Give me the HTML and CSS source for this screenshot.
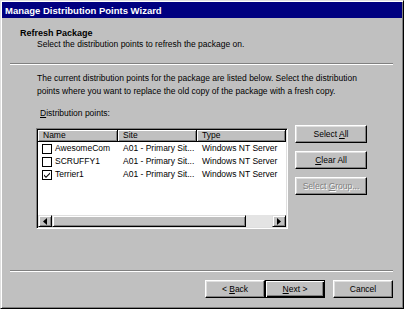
FILE: index.html
```html
<!DOCTYPE html>
<html>
<head>
<meta charset="utf-8">
<link rel="stylesheet" href="styles.css">
</head>
<body>
<div class="window">
  <div class="titlebar">Manage Distribution Points Wizard</div>
  <div class="header">
    <div class="h-title">Refresh Package</div>
    <div class="h-sub">Select the distribution points to refresh the package on.</div>
  </div>
  <div class="sep sep-top"></div>
  <div class="intro">The current distribution points for the package are listed below. Select the distribution<br>points where you want to replace the old copy of the package with a fresh copy.</div>
  <div class="label"><u>D</u>istribution points:</div>
  <div class="listrow">
    <div class="listbox">
      <div class="lv-head">
        <div class="hcell c-name">Name</div>
        <div class="hcell c-site">Site</div>
        <div class="hcell c-type">Type</div>
      </div>
      <div class="lv-row">
        <div class="cell c-name"><span class="chk"></span><span>AwesomeCom</span></div>
        <div class="cell c-site">A01 - Primary Sit...</div>
        <div class="cell c-type">Windows NT Server</div>
      </div>
      <div class="lv-row">
        <div class="cell c-name"><span class="chk"></span><span>SCRUFFY1</span></div>
        <div class="cell c-site">A01 - Primary Sit...</div>
        <div class="cell c-type">Windows NT Server</div>
      </div>
      <div class="lv-row">
        <div class="cell c-name"><span class="chk"><svg width="8" height="8" viewBox="0 0 8 8"><path d="M1 3.5 L3 5.5 L7 1.5 L7 3 L3 7 L1 5 Z" fill="#000"/></svg></span><span>Terrier1</span></div>
        <div class="cell c-site">A01 - Primary Sit...</div>
        <div class="cell c-type">Windows NT Server</div>
      </div>
      <div class="lv-space"></div>
      <div class="hscroll">
        <div class="sb-btn"><svg width="4" height="7" viewBox="0 0 4 7"><path d="M4 0 L0 3.5 L4 7 Z" fill="#000"/></svg></div>
        <div class="sb-thumb"></div>
        <div class="sb-track"></div>
        <div class="sb-btn"><svg width="4" height="7" viewBox="0 0 4 7"><path d="M0 0 L4 3.5 L0 7 Z" fill="#000"/></svg></div>
      </div>
    </div>
    <div class="sidebtns">
      <div class="btn"><span>Select <u>A</u>ll</span></div>
      <div class="btn"><span><u>C</u>lear All</span></div>
      <div class="btn disabled"><span>Select <u>G</u>roup...</span></div>
    </div>
  </div>
  <div class="sep sep-bottom"></div>
  <div class="footer">
    <div class="btn fbtn"><span>&lt; <u>B</u>ack</span></div>
    <div class="btn fbtn default"><span><u>N</u>ext &gt;</span></div>
    <div class="btn fbtn cancel"><span>Cancel</span></div>
  </div>
</div>
</body>
</html>
```

FILE: styles.css
```css
html, body {
  margin: 0;
  padding: 0;
  background: #c0c0c0;
}
body {
  font-family: "Liberation Sans", Arial, sans-serif;
  font-size: 8.5px;
  color: #000;
}
.window {
  width: 404px;
  height: 309px;
  box-sizing: border-box;
  border: 1px solid;
  border-color: #dfdfdf #000 #000 #dfdfdf;
  box-shadow: inset 1px 1px #fff, inset -1px -1px #808080;
  padding: 1px;
  background: #c0c0c0;
  overflow: hidden;
}
.titlebar {
  height: 16px;
  line-height: 17px;
  background: #000080;
  color: #fff;
  font-weight: bold;
  font-size: 9.5px;
  padding-left: 3px;
}
.header {
  padding: 9px 0 0 18px;
}
.h-title {
  font-weight: bold;
  font-size: 9px;
  line-height: 12px;
}
.h-sub {
  line-height: 11px;
  padding-left: 17px;
}
.sep {
  border-top: 1px solid #808080;
  border-bottom: 1px solid #fff;
  height: 0;
  margin: 0 9px 0 8px;
}
.sep-top {
  margin-top: 13px;
}
.intro {
  margin-top: 7px;
  padding-left: 35px;
  line-height: 13px;
}
.label {
  margin-top: 9px;
  padding-left: 38px;
  line-height: 12px;
}
.listrow {
  margin-top: 6px;
  display: flex;
  align-items: flex-start;
  padding-left: 34px;
  gap: 7px;
}
.listbox {
  margin-top: 3px;
  width: 252px;
  height: 101px;
  box-sizing: border-box;
  border: 1px solid;
  border-color: #808080 #fff #fff #808080;
  box-shadow: inset 1px 1px #000, inset -1px -1px #dfdfdf;
  padding: 1px;
  background: #fff;
  display: flex;
  flex-direction: column;
}
.lv-head {
  display: flex;
  height: 12px;
}
.hcell {
  box-sizing: border-box;
  height: 12px;
  line-height: 11px;
  background: #c0c0c0;
  border-right: 1px solid #000;
  border-bottom: 1px solid #000;
  box-shadow: inset 1px 1px #fff, inset -1px -1px #808080;
  padding-left: 5px;
}
.c-name { width: 80px; flex: none; box-sizing: border-box; }
.c-site { width: 79px; flex: none; box-sizing: border-box; }
.c-type { flex: 1; box-sizing: border-box; }
.lv-row {
  display: flex;
  height: 13px;
  line-height: 13px;
}
.cell {
  padding-left: 5px;
  white-space: nowrap;
  overflow: hidden;
  display: flex;
  align-items: center;
}
.cell.c-name {
  padding-left: 4px;
}
.chk {
  width: 10px;
  height: 10px;
  box-sizing: border-box;
  border: 1px solid #000;
  background: #fff;
  margin-right: 3px;
  display: flex;
  align-items: center;
  justify-content: center;
  flex: none;
}
.lv-space {
  flex: 1;
}
.hscroll {
  display: flex;
  height: 12px;
}
.sb-btn {
  width: 14px;
  box-sizing: border-box;
  background: #c0c0c0;
  border: 1px solid;
  border-color: #dfdfdf #000 #000 #dfdfdf;
  box-shadow: inset 1px 1px #fff, inset -1px -1px #808080;
  display: flex;
  align-items: center;
  justify-content: center;
  flex: none;
}
.sb-thumb {
  width: 194px;
  box-sizing: border-box;
  background: #c0c0c0;
  border: 1px solid;
  border-color: #dfdfdf #000 #000 #dfdfdf;
  box-shadow: inset 1px 1px #fff, inset -1px -1px #808080;
  flex: none;
}
.sb-track {
  flex: 1;
  background: #e4e4e4;
}
.sidebtns {
  display: flex;
  flex-direction: column;
  gap: 8px;
}
.btn {
  width: 72px;
  height: 18px;
  box-sizing: border-box;
  background: #c0c0c0;
  border: 1px solid;
  border-color: #fff #000 #000 #fff;
  box-shadow: inset -1px -1px #808080, inset 1px 1px #dfdfdf;
  display: flex;
  align-items: center;
  justify-content: center;
  white-space: nowrap;
}
.btn.disabled {
  color: #808080;
  text-shadow: 1px 1px #fff;
}
.sep-bottom {
  margin-top: 41px;
}
.footer {
  display: flex;
  justify-content: flex-end;
  padding-right: 9px;
  margin-top: 8px;
}
.fbtn {
  width: 60px;
}
.fbtn.default {
  border: 1px solid #000;
  box-shadow: inset 1px 1px #fff, inset -1px -1px #000, inset -2px -2px #808080;
}
.fbtn.cancel {
  margin-left: 8px;
}
```
